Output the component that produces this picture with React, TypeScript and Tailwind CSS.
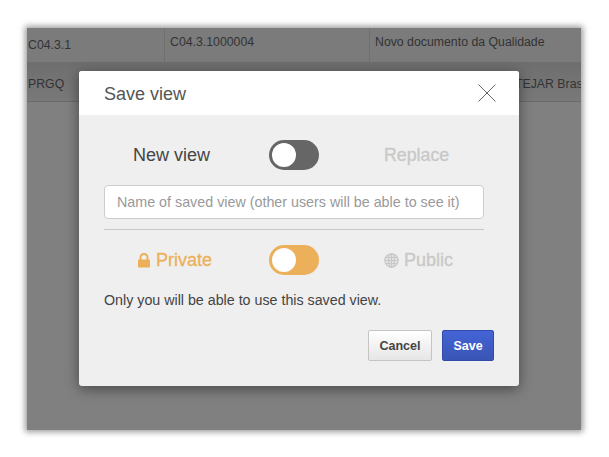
function Toggle({ color }: { color: string }) {
  return (
    <div className={`flex h-[30px] w-[50px] items-center rounded-full pl-[3px] ${color}`}>
      <div className="h-6 w-6 rounded-full bg-white" />
    </div>
  )
}

export default function App() {
  return (
    <div className="h-[457px] w-[609px] overflow-hidden bg-white pl-[27px] pt-[28px] font-['Liberation_Sans',Arial,sans-serif]">
      <div className="relative h-[402px] w-[554px] overflow-hidden bg-[#808080] shadow-[0_0_6px_2px_rgba(0,0,0,0.4)]">
        <div className="grid h-[34px] grid-cols-[137px_205px_1fr] bg-[#7b7b7b] text-[12.3px] text-[#333]">
          <div className="pl-px pt-2">C04.3.1</div>
          <div className="border-l border-[#707070] pl-[5px] pt-[5px]">C04.3.1000004</div>
          <div className="border-l border-[#707070] pl-[5px] pt-[5px]">Novo documento da Qualidade</div>
        </div>
        <div className="grid h-10 grid-cols-[137px_205px_1fr] border-b border-[#6a6a6a] bg-gradient-to-b from-[#6e6e6e] to-[#797979] text-[12.3px] text-[#333]">
          <div className="pl-px pt-[13px]">PRGQ</div>
          <div className="border-l border-[#707070]" />
          <div className="border-l border-[#707070] pl-[145px] pt-[13px] whitespace-nowrap">TEJAR Brasil</div>
        </div>

        <div className="absolute left-[52px] top-[43px] h-[315px] w-[440px] overflow-hidden rounded-[3px] bg-[#efefef] shadow-[0_3px_14px_rgba(0,0,0,0.45)]">
          <div className="flex h-[44px] items-center justify-between bg-white pl-[25px] pr-[23px]">
            <span className="pt-px text-lg text-[#555]">Save view</span>
            <svg width="18" height="18" viewBox="0 0 18 18" stroke="#666" strokeWidth="1" fill="none">
              <path d="M0.5 0.5L17.5 17.5M17.5 0.5L0.5 17.5" />
            </svg>
          </div>

          <div className="px-[25px]">
            <div className="flex h-[70px] items-center pt-[10px]">
              <span className="w-[165px] pl-[29px] text-lg text-[#444]">New view</span>
              <Toggle color="bg-[#666]" />
              <span className="pl-[65px] text-[17.8px] text-[#c8c8c8] [-webkit-text-stroke:0.3px_#c8c8c8]">Replace</span>
            </div>
            <div className="flex h-[34px] w-[380px] items-center rounded-[4px] border border-[#ccc] bg-white pl-3 pt-px text-[14.3px] text-[#999] whitespace-nowrap">
              Name of saved view (other users will be able to see it)
            </div>
            <div className="mt-[10px] w-[380px] border-t border-[#c8c8c8]" />
            <div className="flex h-[60px] items-center">
              <div className="flex w-[165px] items-center pl-[33px] text-lg text-[#ecb05a] [-webkit-text-stroke:0.3px_#ecb05a]">
                <svg className="mr-[5px]" width="14" height="15" viewBox="0 0 14 15">
                  <path d="M3.5 7V4.5a3.5 3.5 0 0 1 7 0V7" fill="none" stroke="#ecb05a" strokeWidth="2" />
                  <rect x="1" y="6.5" width="12" height="8" rx="1" fill="#ecb05a" />
                </svg>
                Private
              </div>
              <Toggle color="bg-[#ecb05a]" />
              <div className="flex items-center pl-[65px] text-lg text-[#c8c8c8] [-webkit-text-stroke:0.3px_#c8c8c8]">
                <svg className="mr-[5px]" width="15" height="15" viewBox="0 0 15 15" fill="none" stroke="#c8c8c8" strokeWidth="1.3">
                  <circle cx="7.5" cy="7.5" r="6.6" />
                  <ellipse cx="7.5" cy="7.5" rx="3" ry="6.6" />
                  <path d="M7.5 1V14M1 7.5H14M2 4.5H13M2 10.5H13" />
                </svg>
                Public
              </div>
            </div>
            <p className="text-[14.25px] text-[#444]">Only you will be able to use this saved view.</p>
            <div className="mt-[19px] flex justify-end gap-[10px]">
              <button className="h-[31px] w-16 rounded-[2px] border border-[#c4c4c4] bg-gradient-to-b from-white to-[#e6e6e6] text-[12.5px] font-bold text-[#444]">
                Cancel
              </button>
              <button className="h-[31px] w-[52px] rounded-[2px] border border-[#2f4aa8] bg-gradient-to-b from-[#4464d8] to-[#3a55b4] text-[12.5px] font-bold text-white">
                Save
              </button>
            </div>
          </div>
        </div>
      </div>
    </div>
  )
}
